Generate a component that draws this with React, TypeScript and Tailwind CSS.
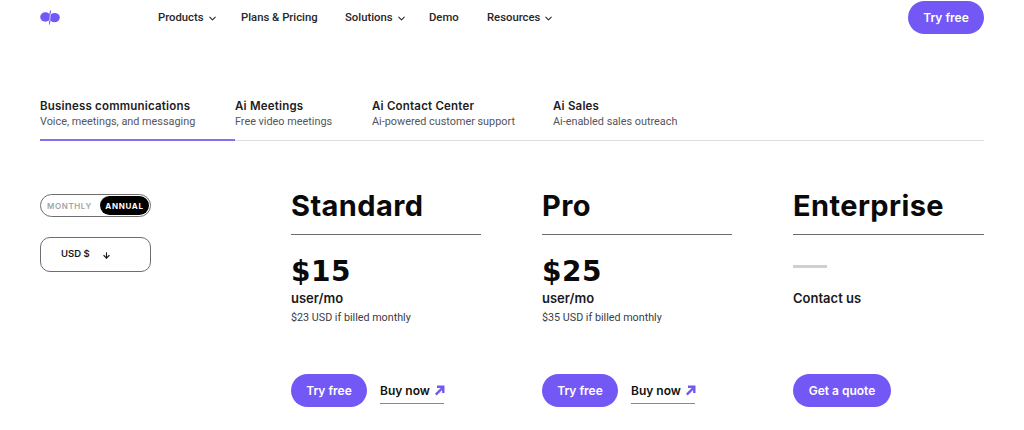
import React from "react";
import { ChevronDown, ArrowDown } from "lucide-react";

const Nav = ({ label, chevron, className = "" }: { label: string; chevron?: boolean; className?: string }) => (
  <div className={`flex items-center gap-[3px] pt-[1px] text-[11.3px] font-medium text-[#26262b] font-['Roboto','Liberation_Sans',sans-serif] ${className}`}>
    <span>{label}</span>
    {chevron && <ChevronDown size={11} strokeWidth={2.3} />}
  </div>
);

const Tab = ({ title, sub, width, active }: { title: string; sub: string; width: string; active?: boolean }) => (
  <div className={`${width} h-[43px] -mb-px pt-[1px] ${active ? "border-b-2 border-[#8471f2]" : ""}`}>
    <div className="text-[11.5px] leading-[14px] font-semibold tracking-[0.2px] text-[#1d1d22] whitespace-nowrap">{title}</div>
    <div className="mt-[1px] text-[10.85px] leading-[16px] text-[#55555c] whitespace-nowrap font-['Roboto','Liberation_Sans',sans-serif]">{sub}</div>
  </div>
);

const Arrow = () => (
  <svg width="11" height="11" viewBox="0 0 11 11" className="ml-[4px] mt-[2px] shrink-0">
    <path d="M1.8 9.6 L8.5 2.9 M3 1.8 H9.3 V8" fill="none" stroke="#7358f6" strokeWidth="2.4" />
  </svg>
);

const Cta = ({ label, width }: { label: string; width: string }) => (
  <div className={`${width} h-[33px] rounded-full bg-[#7358f6] flex items-center justify-center text-white text-[12px] font-semibold whitespace-nowrap`}>
    {label}
  </div>
);

const Plan = ({ name, price, note, cta, width }: { name: string; price?: string; note?: string; cta?: boolean; width: string }) => (
  <div className={`${width} min-w-0`}>
    <div className="h-[45px] border-b border-[#6b6b6b] text-[29px] leading-[28px] font-bold tracking-[0.4px] text-[#0a0a0a] pt-[2px] whitespace-nowrap">
      {name}
    </div>
    <div className="h-[139px]">
      {price ? (
        <div className="pt-[22px]">
          <div className="text-[28px] leading-[30px] font-bold tracking-[0.5px] text-[#0a0a0a] font-['DejaVu_Sans',sans-serif]">{price}</div>
          <div className="mt-[2px] text-[13px] leading-[18px] font-semibold text-[#19191d]">user/mo</div>
          <div className="mt-[3px] text-[10.75px] leading-[16px] text-[#3c3c42] font-['Roboto','Liberation_Sans',sans-serif]">{note}</div>
        </div>
      ) : (
        <div className="pt-[30px]">
          <div className="w-[34px] h-[3px] bg-[#cfcfcf]" />
          <div className="mt-[21px] text-[13px] leading-[18px] font-semibold text-[#19191d]">Contact us</div>
        </div>
      )}
    </div>
    {cta ? (
      <div className="flex items-start gap-[13px]">
        <Cta label="Try free" width="w-[76px]" />
        <div className="mt-[9px] h-[21px] w-[64px] border-b border-[#8a8a8a] flex items-start text-[12px] leading-[15px] font-semibold text-[#111] whitespace-nowrap">
          <span>Buy now</span>
          <Arrow />
        </div>
      </div>
    ) : (
      <Cta label="Get a quote" width="w-[98px]" />
    )}
  </div>
);

export default function App() {
  return (
    <div className="w-[1024px] h-[430px] overflow-hidden bg-white px-[40px] font-['Inter','Liberation_Sans',sans-serif]">
      <header className="h-[35px] flex items-center justify-between">
        <div className="flex items-center">
          <svg width="20" height="15" viewBox="0 0 20 15" className="-mt-[1px]">
            <ellipse cx="5.4" cy="7" rx="5.2" ry="4.7" fill="#7358f6" />
            <ellipse cx="14.6" cy="7.6" rx="5.2" ry="4.7" fill="#7358f6" />
            <path d="M9 5 L10.2 0.3 L11 0.6 L10.6 6 Z M11 9 L9.6 14.7 L8.9 14.4 L9.4 8 Z" fill="#7358f6" />
            <path d="M10.4 3.5 L9.6 11" stroke="white" strokeWidth="0.7" fill="none" />
          </svg>
          <nav className="ml-[98px] flex items-center">
            <Nav label="Products" chevron className="w-[83px]" />
            <Nav label="Plans & Pricing" className="w-[104px]" />
            <Nav label="Solutions" chevron className="w-[84px]" />
            <Nav label="Demo" className="w-[58px]" />
            <Nav label="Resources" chevron />
          </nav>
        </div>
        <Cta label="Try free" width="w-[76px]" />
      </header>

      <section className="mt-[63px] flex border-b border-[#dedede]">
        <Tab title="Business communications" sub="Voice, meetings, and messaging" width="w-[195px]" active />
        <Tab title="Ai Meetings" sub="Free video meetings" width="w-[137px]" />
        <Tab title="Ai Contact Center" sub="Ai-powered customer support" width="w-[181px]" />
        <Tab title="Ai Sales" sub="Ai-enabled sales outreach" width="w-[200px]" />
      </section>

      <section className="mt-[49px] flex">
        <div className="w-[251px] shrink-0 pt-[4px]">
          <div className="w-[111px] h-[23px] rounded-full border border-[#6e6e6e] flex items-center justify-between pl-[6px] pr-[1px]">
            <span className="text-[8px] font-semibold tracking-[0.6px] text-[#a3a3a3]">MONTHLY</span>
            <span className="w-[49px] h-[19px] rounded-full bg-black text-white flex items-center justify-center text-[8px] font-bold tracking-[0.7px]">ANNUAL</span>
          </div>
          <div className="mt-[20px] w-[111px] h-[35px] rounded-[10px] border border-[#6e6e6e] flex items-center pl-[20px]">
            <span className="text-[9.5px] font-semibold text-[#1a1a1a]">USD $</span>
            <ArrowDown size={9} strokeWidth={3} className="ml-[12px] mt-[1px] text-[#1a1a1a]" />
          </div>
        </div>
        <div className="flex-1 flex gap-[61px]">
          <Plan width="w-[190px]" name="Standard" price="$15" note="$23 USD if billed monthly" cta />
          <Plan width="w-[190px]" name="Pro" price="$25" note="$35 USD if billed monthly" cta />
          <Plan width="flex-1" name="Enterprise" />
        </div>
      </section>
    </div>
  );
}
